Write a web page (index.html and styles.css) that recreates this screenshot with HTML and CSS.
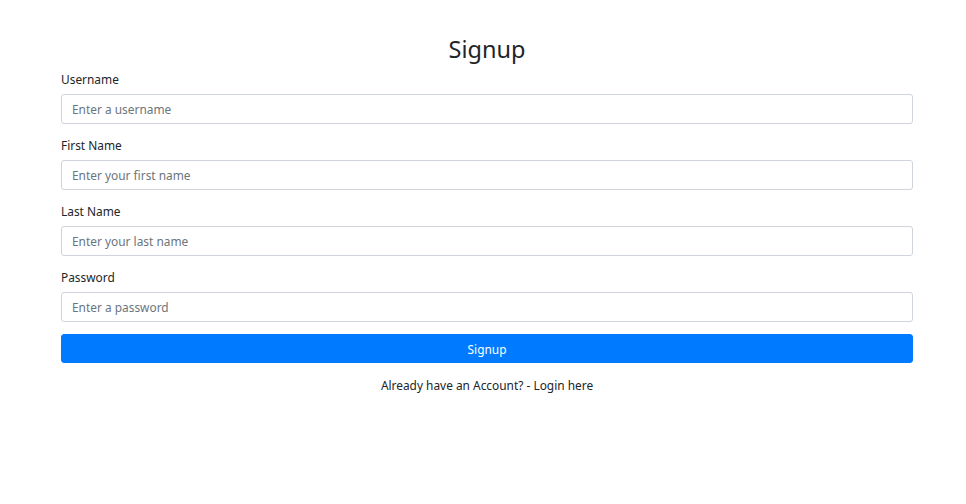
FILE: index.html
```html
<!DOCTYPE html>
<html>
<head>
<meta charset="utf-8">
<link rel="stylesheet" href="styles.css">
</head>
<body>
<div class="container">
  <h2 class="title">Signup</h2>
  <form class="form">
    <div class="group">
      <label class="label">Username</label>
      <input class="input" type="text" placeholder="Enter a username">
    </div>
    <div class="group">
      <label class="label">First Name</label>
      <input class="input" type="text" placeholder="Enter your first name">
    </div>
    <div class="group">
      <label class="label">Last Name</label>
      <input class="input" type="text" placeholder="Enter your last name">
    </div>
    <div class="group">
      <label class="label">Password</label>
      <input class="input" type="password" placeholder="Enter a password">
    </div>
    <button class="btn" type="button">Signup</button>
  </form>
  <p class="foot">Already have an Account? - <a class="link" href="#">Login here</a></p>
</div>
</body>
</html>
```
FILE: styles.css
```css
html, body {
  margin: 0;
  padding: 0;
  background: #fff;
}
body {
  font-family: "Noto Sans", "Open Sans", sans-serif;
  font-size: 11.9px;
  line-height: 1.5;
  color: #212529;
}
.container {
  padding: 34px 53px 0 61px;
}
.title {
  margin: 0 0 6px;
  text-align: center;
  font-weight: 400;
  font-size: 23.5px;
  line-height: 30px;
}
.form {
  display: flex;
  flex-direction: column;
}
.group {
  display: flex;
  flex-direction: column;
  margin-bottom: 12px;
}
.label {
  margin-bottom: 5px;
  line-height: 19px;
}
.input {
  box-sizing: border-box;
  height: 30px;
  padding: 0 10px;
  border: 1px solid #ced4da;
  border-radius: 3px;
  font-family: inherit;
  font-size: 11.9px;
  color: #495057;
  outline: none;
}
.input::placeholder {
  color: #6c757d;
  opacity: 1;
}
.btn {
  height: 29px;
  border: 1px solid #007bff;
  background: #007bff;
  color: #fff;
  border-radius: 3px;
  font-family: inherit;
  font-size: 11.9px;
  padding: 0;
}
.foot {
  margin: 14px 0 0;
  text-align: center;
}
.link {
  color: #212529;
  text-decoration: none;
}
```
